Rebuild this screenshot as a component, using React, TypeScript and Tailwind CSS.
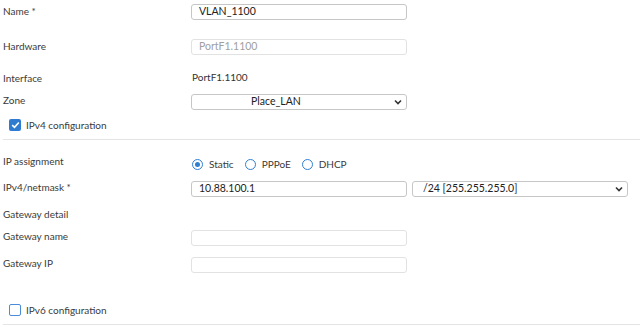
import React from "react";

const font = { fontFamily: "Lato, 'Noto Sans', sans-serif" };

function Label({ children }: { children: React.ReactNode }) {
  return (
    <div className="w-[191px] shrink-0 pl-[3px] text-[10px] leading-[12px] text-[#3a3a3a]">
      {children}
    </div>
  );
}

function Chevron() {
  return (
    <svg width="8" height="6" viewBox="0 0 8 6" className="shrink-0">
      <path d="M1 1.5 L4 4.5 L7 1.5" fill="none" stroke="#333" strokeWidth="1.6" />
    </svg>
  );
}

function Radio({ checked, label }: { checked?: boolean; label: string }) {
  return (
    <div className="flex items-center gap-[6px]">
      <span className="flex h-[11px] w-[11px] items-center justify-center rounded-full border-[1.5px] border-[#2f7fd3] bg-white">
        {checked && <span className="h-[5px] w-[5px] rounded-full bg-[#2f7fd3]" />}
      </span>
      <span className="text-[10px] text-[#3a3a3a]">{label}</span>
    </div>
  );
}

function Check({ checked, label }: { checked?: boolean; label: string }) {
  return (
    <div className="flex h-[12px] items-center gap-[5px] pl-[9px]">
      {checked ? (
        <span className="flex h-[12px] w-[12px] items-center justify-center rounded-[2px] bg-[#2f7bd0]">
          <svg width="9" height="8" viewBox="0 0 9 8">
            <path d="M1.2 4.2 L3.5 6.3 L7.8 1.5" fill="none" stroke="#fff" strokeWidth="1.6" />
          </svg>
        </span>
      ) : (
        <span className="h-[12px] w-[12px] rounded-[2px] border-[1.5px] border-[#4a8cd8] bg-white" />
      )}
      <span className="text-[10px] text-[#3a3a3a]">{label}</span>
    </div>
  );
}

export default function App() {
  return (
    <div className="h-[334px] w-[640px] overflow-hidden bg-white pt-[4px]" style={font}>
      <div className="flex h-[16px] items-start">
        <div className="pt-[1px]"><Label>Name *</Label></div>
        <div className="flex h-[16px] w-[216px] items-center rounded-[3px] border border-[#c6c6c6] pl-[7px] text-[10.5px] text-[#222]">
          VLAN_1100
        </div>
      </div>

      <div className="mt-[19px] flex h-[16px] items-start">
        <div className="pt-[1px]"><Label>Hardware</Label></div>
        <div className="flex h-[16px] w-[216px] items-center rounded-[3px] border border-[#e2e2e2] pl-[7px] text-[10.5px] text-[#a0a0a0]">
          PortF1.1100
        </div>
      </div>

      <div className="mt-[14px] flex h-[16px] items-center pt-[1px]">
        <Label>Interface</Label>
        <div className="pl-[1px] text-[10px] text-[#333]">PortF1.1100</div>
      </div>

      <div className="mt-[9px] flex h-[16px] items-start">
        <div className="pt-[0px]"><Label>Zone</Label></div>
        <div className="flex h-[16px] w-[216px] items-center justify-between rounded-[3px] border border-[#c6c6c6] pl-[59px] pr-[4px] text-[10.5px] text-[#222]">
          <span>Place_LAN</span>
          <Chevron />
        </div>
      </div>

      <div className="mt-[9px]">
        <Check checked label="IPv4 configuration" />
      </div>

      <div className="ml-[3px] mt-[8px] border-t border-[#e4e4e4]" />

      <div className="mt-[15px] flex h-[16px] items-start">
        <div className="pt-[0px]"><Label>IP assignment</Label></div>
        <div className="flex h-[16px] items-center gap-[11px] pl-[1px] pt-[2px]">
          <Radio checked label="Static" />
          <Radio label="PPPoE" />
          <Radio label="DHCP" />
        </div>
      </div>

      <div className="mt-[10px] flex h-[16px] items-start">
        <div className="pt-[0px]"><Label>IPv4/netmask *</Label></div>
        <div className="flex h-[16px] w-[216px] items-center rounded-[3px] border border-[#c6c6c6] pl-[7px] text-[10.5px] text-[#222]">
          10.88.100.1
        </div>
        <div className="ml-[5px] flex h-[16px] w-[216px] items-center justify-between rounded-[3px] border border-[#c6c6c6] pl-[10px] pr-[4px] text-[10.5px] text-[#222]">
          <span>/24 [255.255.255.0]</span>
          <Chevron />
        </div>
      </div>

      <div className="mt-[11px] flex h-[12px] items-center">
        <Label>Gateway detail</Label>
      </div>

      <div className="mt-[10px] flex h-[16px] items-start">
        <div className="pt-[0px]"><Label>Gateway name</Label></div>
        <div className="h-[16px] w-[216px] rounded-[3px] border border-[#e2e2e2]" />
      </div>

      <div className="mt-[11px] flex h-[16px] items-start">
        <div className="pt-[0px]"><Label>Gateway IP</Label></div>
        <div className="h-[16px] w-[216px] rounded-[3px] border border-[#e2e2e2]" />
      </div>

      <div className="mt-[31px]">
        <Check label="IPv6 configuration" />
      </div>

      <div className="ml-[3px] mt-[8px] border-t border-[#e4e4e4]" />
    </div>
  );
}
